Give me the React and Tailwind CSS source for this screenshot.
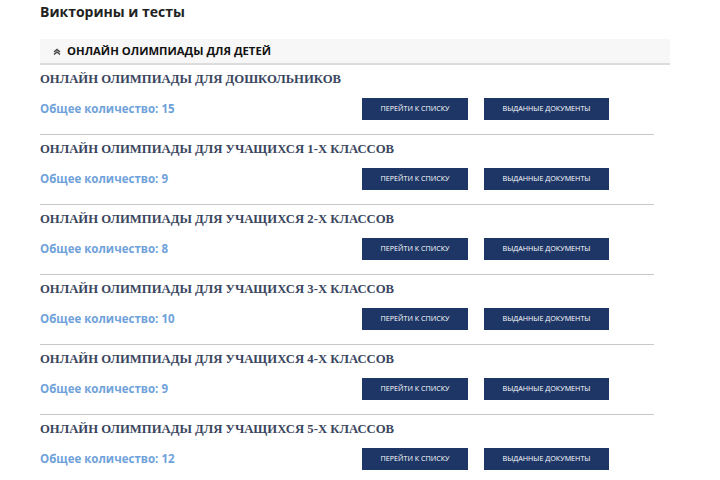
import React from "react";

const rows = [
  { title: "ОНЛАЙН ОЛИМПИАДЫ ДЛЯ ДОШКОЛЬНИКОВ", count: 15 },
  { title: "ОНЛАЙН ОЛИМПИАДЫ ДЛЯ УЧАЩИХСЯ 1-Х КЛАССОВ", count: 9 },
  { title: "ОНЛАЙН ОЛИМПИАДЫ ДЛЯ УЧАЩИХСЯ 2-Х КЛАССОВ", count: 8 },
  { title: "ОНЛАЙН ОЛИМПИАДЫ ДЛЯ УЧАЩИХСЯ 3-Х КЛАССОВ", count: 10 },
  { title: "ОНЛАЙН ОЛИМПИАДЫ ДЛЯ УЧАЩИХСЯ 4-Х КЛАССОВ", count: 9 },
  { title: "ОНЛАЙН ОЛИМПИАДЫ ДЛЯ УЧАЩИХСЯ 5-Х КЛАССОВ", count: 12 },
];

export default function App() {
  return (
    <div className="w-[720px] h-[480px] overflow-hidden bg-white font-['Open_Sans',sans-serif]">
      <div className="pl-[40px] pt-[2px]">
        <h1 className="text-[14px] font-bold text-[#222] leading-[20px]">Викторины и тесты</h1>
        <div className="mt-[17px] w-[630px] h-[26px] bg-[#f7f7f7] border-b-2 border-[#dcdcdc] flex items-center pl-[13px]">
          <svg width="8" height="7" viewBox="0 0 8 7" className="mr-[6px]">
            <path d="M1 4 L4 1.5 L7 4" stroke="#444" strokeWidth="1.4" fill="none" />
            <path d="M1 6.5 L4 4 L7 6.5" stroke="#444" strokeWidth="1.4" fill="none" />
          </svg>
          <span className="text-[11.3px] font-bold text-[#111] leading-none">ОНЛАЙН ОЛИМПИАДЫ ДЛЯ ДЕТЕЙ</span>
        </div>
        <div className="w-[614px]">
          {rows.map((r, i) => (
            <div key={i} className="border-b border-[#c8c8c8] h-[70px] pt-[6px]">
              <div className="font-['Liberation_Serif',serif] font-bold text-[12.7px] text-[#3a4660] leading-[16px]">
                {r.title}
              </div>
              <div className="flex items-center mt-[11px]">
                <div className="w-[322px] text-[11.5px] font-bold text-[#6fa2da]">
                  Общее количество: {r.count}
                </div>
                <button className="w-[106px] h-[22px] bg-[#1d3666] text-white text-[7.2px] uppercase leading-none">
                  Перейти к списку
                </button>
                <button className="ml-[16px] w-[125px] h-[22px] bg-[#1d3666] text-white text-[7.2px] uppercase leading-none">
                  Выданные документы
                </button>
              </div>
            </div>
          ))}
        </div>
      </div>
    </div>
  );
}
